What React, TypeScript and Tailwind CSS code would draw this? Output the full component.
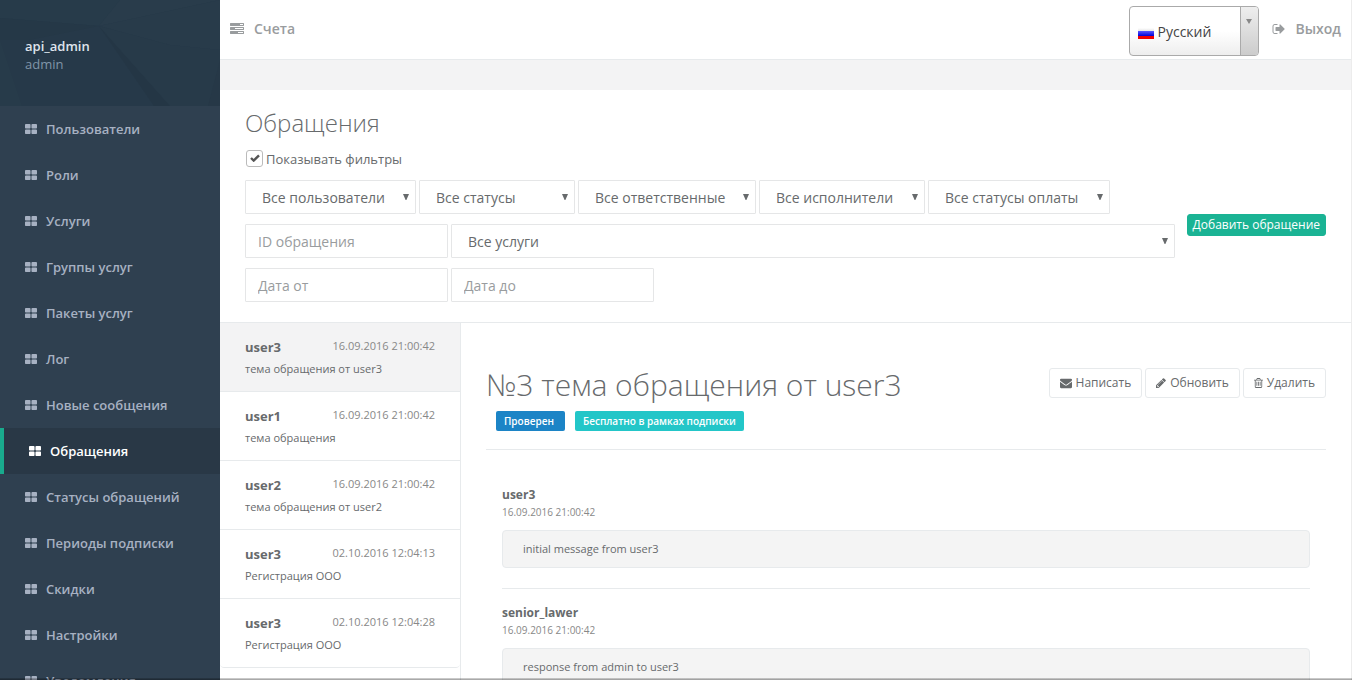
import { useState } from "react";
import type { ReactNode } from "react";

const ICONS = {
  thLarge: {
    viewBox: "64 0 1664 1792",
    path: "M832 1024v384q0 52-38 90t-90 38h-512q-52 0-90-38t-38-90v-384q0-52 38-90t90-38h512q52 0 90 38t38 90zm0-768v384q0 52-38 90t-90 38h-512q-52 0-90-38t-38-90v-384q0-52 38-90t90-38h512q52 0 90 38t38 90zm896 768v384q0 52-38 90t-90 38h-512q-52 0-90-38t-38-90v-384q0-52 38-90t90-38h512q52 0 90 38t38 90zm0-768v384q0 52-38 90t-90 38h-512q-52 0-90-38t-38-90v-384q0-52 38-90t90-38h512q52 0 90 38t38 90z",
  },
  tasks: {
    viewBox: "0 0 1792 1792",
    path: "M1024 1408h640v-128h-640v128zm-384-512h1024v-128h-1024v128zm640-512h384v-128h-384v128zm512 832v256q0 26-19 45t-45 19h-1664q-26 0-45-19t-19-45v-256q0-26 19-45t45-19h1664q26 0 45 19t19 45zm0-512v256q0 26-19 45t-45 19h-1664q-26 0-45-19t-19-45v-256q0-26 19-45t45-19h1664q26 0 45 19t19 45zm0-512v256q0 26-19 45t-45 19h-1664q-26 0-45-19t-19-45v-256q0-26 19-45t45-19h1664q26 0 45 19t19 45z",
  },
  signOut: {
    viewBox: "0 0 1792 1792",
    path: "M704 1440q0 4 1 20t.5 26.5-3 23.5-10 19.5-20.5 6.5h-320q-119 0-203.5-84.5t-84.5-203.5v-704q0-119 84.5-203.5t203.5-84.5h320q13 0 22.5 9.5t9.5 22.5q0 4 1 20t.5 26.5-3 23.5-10 19.5-20.5 6.5h-320q-66 0-113 47t-47 113v704q0 66 47 113t113 47h312l11.5 1 11.5 3 8 5.5 7 9 2 13.5zm928-544q0 26-19 45l-544 544q-19 19-45 19t-45-19-19-45v-288h-448q-26 0-45-19t-19-45v-384q0-26 19-45t45-19h448v-288q0-26 19-45t45-19 45 19l544 544q19 19 19 45z",
  },
  envelope: {
    viewBox: "0 0 1792 1792",
    path: "M1792 710v794q0 66-47 113t-113 47h-1472q-66 0-113-47t-47-113v-794q44 49 101 87 362 246 497 345 57 42 92.5 65.5t94.5 48 110 24.5h2q51 0 110-24.5t94.5-48 92.5-65.5q170-123 498-345 57-39 100-87zm0-294q0 79-49 151t-122 123q-376 261-468 325-10 7-42.5 31t-54 38.5-52 32.5-57.5 27-50 9h-2q-23 0-50-9t-57.5-27-52-32.5-54-38.5-42.5-31q-91-64-262-182.5t-205-142.5q-62-42-117-115.5t-55-136.5q0-78 41.5-130t118.5-52h1472q65 0 112.5 47t47.5 113z",
  },
  pencil: {
    viewBox: "128 0 1536 1792",
    path: "M491 1536l91-91-235-235-91 91v107h128v128h107zm523-928q0-22-22-22-10 0-17 7l-542 542q-7 7-7 17 0 22 22 22 10 0 17-7l542-542q7-7 7-17zm-54-192l416 416-832 832h-416v-416zm683 96q0 53-37 90l-166 166-416-416 166-165q36-38 90-38 53 0 91 38l235 234q37 39 37 91z",
  },
  trash: {
    viewBox: "192 0 1408 1792",
    path: "M704 736v576q0 14-9 23t-23 9h-64q-14 0-23-9t-9-23v-576q0-14 9-23t23-9h64q14 0 23 9t9 23zm256 0v576q0 14-9 23t-23 9h-64q-14 0-23-9t-9-23v-576q0-14 9-23t23-9h64q14 0 23 9t9 23zm256 0v576q0 14-9 23t-23 9h-64q-14 0-23-9t-9-23v-576q0-14 9-23t23-9h64q14 0 23 9t9 23zm128 724v-948h-896v948q0 22 7 40.5t14.5 27 10.5 8.5h832q3 0 10.5-8.5t14.5-27 7-40.5zm-672-1076h448l-48-117q-7-9-17-11h-317q-10 2-17 11zm928 32v64q0 14-9 23t-23 9h-96v948q0 83-47 143.5t-113 60.5h-832q-66 0-113-58.5t-47-141.5v-952h-96q-14 0-23-9t-9-23v-64q0-14 9-23t23-9h309l70-167q15-37 54-63t79-26h320q40 0 79 26t54 63l70 167h309q14 0 23 9t9 23z",
  },
};

const MENU = [
  "Пользователи",
  "Роли",
  "Услуги",
  "Группы услуг",
  "Пакеты услуг",
  "Лог",
  "Новые сообщения",
  "Обращения",
  "Статусы обращений",
  "Периоды подписки",
  "Скидки",
  "Настройки",
  "Уведомления",
];

const FILTERS = [
  { label: "Все пользователи", width: "w-[171px]" },
  { label: "Все статусы", width: "w-[156px]" },
  { label: "Все ответственные", width: "w-[178px]" },
  { label: "Все исполнители", width: "w-[166px]" },
  { label: "Все статусы оплаты", width: "w-[182px]" },
];

const TICKETS = [
  { user: "user3", date: "16.09.2016 21:00:42", subject: "тема обращения от user3" },
  { user: "user1", date: "16.09.2016 21:00:42", subject: "тема обращения" },
  { user: "user2", date: "16.09.2016 21:00:42", subject: "тема обращения от user2" },
  { user: "user3", date: "02.10.2016 12:04:13", subject: "Регистрация ООО" },
  { user: "user3", date: "02.10.2016 12:04:28", subject: "Регистрация ООО" },
];

const MESSAGES = [
  { user: "user3", date: "16.09.2016 21:00:42", text: "initial message from user3" },
  { user: "senior_lawer", date: "16.09.2016 21:00:42", text: "response from admin to user3" },
];

function Icon({ name, className = "" }: { name: keyof typeof ICONS; className?: string }) {
  return (
    <svg viewBox={ICONS[name].viewBox} fill="currentColor" className={`shrink-0 ${className}`} aria-hidden="true">
      <path d={ICONS[name].path} />
    </svg>
  );
}

function Select({ label, className = "" }: { label: string; className?: string }) {
  return (
    <div className={`relative ${className}`}>
      <select
        aria-label={label}
        className="block h-[34px] w-full appearance-none rounded-[1px] border border-[#e5e6e7] bg-white pt-0.5 pr-5 pl-4 text-sm"
      >
        <option>{label}</option>
      </select>
      <svg
        viewBox="0 0 6 6"
        fill="currentColor"
        className="pointer-events-none absolute top-3.5 right-[7px] size-1.5"
        aria-hidden="true"
      >
        <path d="M0 0h6L3.4 6h-.8z" />
      </svg>
    </div>
  );
}

function TextInput({ label }: { label: string }) {
  return (
    <input
      type="text"
      aria-label={label}
      placeholder={label}
      className="h-[34px] w-[203px] rounded-[1px] border border-[#e5e6e7] bg-white px-3 text-sm placeholder:text-[#999c9e]"
    />
  );
}

function ActionButton({ icon, children }: { icon: ReactNode; children: ReactNode }) {
  return (
    <button type="button" className="flex h-[30px] items-center gap-1 rounded-[3px] border border-[#e7eaec] bg-white px-2.5 text-xs">
      {icon}
      {children}
    </button>
  );
}

function Sidebar() {
  return (
    <aside className="w-[220px] shrink-0 overflow-hidden bg-[#2f4050]">
      <div className="relative h-[106px] overflow-hidden bg-[#263949]">
        <svg viewBox="0 0 220 106" preserveAspectRatio="none" className="absolute inset-0 size-full" aria-hidden="true">
          <path d="M0 0h120L99 26 0 18z" fill="#273b4a" />
          <path d="M120 0h100L99 26z" fill="#293c4b" />
          <path d="M220 0v50l-50-5L99 26z" fill="#283b4a" />
          <path d="M0 18l99 8-70 14L0 40z" fill="#253847" />
          <path d="M99 26l71 80h-16z" fill="#243645" />
          <path d="M99 26l71 19 50 5v56h-50z" fill="#273a49" />
          <path d="M0 40l22 66H0z" fill="#273b4a" />
          <path d="M220 60v46h-12z" fill="#263847" />
        </svg>
        <div className="relative px-[25px] pt-[37px] text-[13px] leading-[18px]">
          <div className="font-semibold text-[#dfe4ed]">api_admin</div>
          <div className="text-[#8095a8]">admin</div>
        </div>
      </div>
      <nav>
        {MENU.map((item) => {
          const active = item === "Обращения";
          return (
            <a
              key={item}
              href="#"
              className={`flex h-[46px] items-center gap-[9px] px-[25px] text-[13px] font-semibold ${
                active ? "border-l-4 border-[#19aa8d] bg-[#293846] text-white" : "text-[#a7b1c2]"
              }`}
            >
              <Icon name="thLarge" className="h-[13px] w-3" />
              <span className="pt-0.5">{item}</span>
            </a>
          );
        })}
      </nav>
    </aside>
  );
}

function Header() {
  return (
    <header className="flex h-[60px] shrink-0 items-start justify-between border-b border-[#e7eaec] bg-white px-2.5 pt-1.5 text-sm font-semibold text-[#999c9e]">
      <a href="#" className="flex h-[46px] items-center gap-2.5">
        <Icon name="tasks" className="size-3.5" />
        Счета
      </a>
      <div className="flex gap-[13px]">
        <div className="relative h-[50px] w-[130px] overflow-hidden rounded border border-[#aaa] bg-linear-to-b from-white from-50% to-[#eee]">
          <select aria-label="Язык" className="block size-full appearance-none bg-transparent pt-0.5 pr-5 pl-7 font-normal text-[#444]">
            <option>Русский</option>
          </select>
          <svg viewBox="0 0 16 11" className="pointer-events-none absolute top-[21px] left-2 h-[11px] w-4" aria-hidden="true">
            <defs>
              <linearGradient id="flagWhite" x1="0" y1="0" x2="0" y2="1">
                <stop offset="0" stopColor="#fff" />
                <stop offset="1" stopColor="#e6e6e6" />
              </linearGradient>
              <linearGradient id="flagBlue" x1="0" y1="0" x2="0" y2="1">
                <stop offset="0" stopColor="#5858ff" />
                <stop offset="1" stopColor="#0000d8" />
              </linearGradient>
            </defs>
            <path fill="url(#flagWhite)" d="M0 0h16v3H0z" />
            <path fill="url(#flagBlue)" d="M0 3h16v5H0z" />
            <path fill="#f00000" d="M0 8h16v3H0z" />
          </svg>
          <span className="pointer-events-none absolute inset-y-0 right-0 flex w-[18px] justify-center border-l border-[#aaa] bg-linear-to-b from-[#eee] to-[#ccc] pt-3 text-[#888]">
            <svg viewBox="0 0 6 5" fill="currentColor" className="h-[5px] w-1.5" aria-hidden="true">
              <path d="M0 0h6L3 5z" />
            </svg>
          </span>
        </div>
        <a href="#" className="flex h-[46px] items-center gap-2.5">
          <Icon name="signOut" className="size-3.5" />
          Выход
        </a>
      </div>
    </header>
  );
}

function Filters() {
  const [visible, setVisible] = useState(true);

  return (
    <section className="flex items-center border-b border-[#e7eaec] px-[25px] pt-[18px] pb-5">
      <div className="min-w-0 flex-1">
        <h2 className="text-2xl leading-[30px] font-light">Обращения</h2>
        <label className="mt-3 flex h-[18px] items-start gap-[3px] text-[13px] leading-[18px]">
          <span className="relative ml-px size-[17px]">
            <input
              type="checkbox"
              checked={visible}
              onChange={() => setVisible(!visible)}
              className="block size-full appearance-none rounded-[3px] border border-[#bbb] bg-white"
            />
            {visible && (
              <svg viewBox="0 0 10 8" className="pointer-events-none absolute top-1 left-1 h-2 w-2.5" aria-hidden="true">
                <path d="M1 4l2.7 2.6L9 1.3" fill="none" stroke="#555" strokeWidth="2.4" />
              </svg>
            )}
          </span>
          Показывать фильтры
        </label>
        {visible && (
          <div className="mt-3 flex flex-col gap-2.5">
            <div className="flex gap-[3px]">
              {FILTERS.map((filter) => (
                <Select key={filter.label} label={filter.label} className={filter.width} />
              ))}
            </div>
            <div className="flex gap-[3px]">
              <TextInput label="ID обращения" />
              <Select label="Все услуги" className="flex-1" />
            </div>
            <div className="flex gap-[3px]">
              <TextInput label="Дата от" />
              <TextInput label="Дата до" />
            </div>
          </div>
        )}
      </div>
      <button type="button" className="mt-10 ml-3 h-[22px] rounded-[3px] border border-[#1ab394] bg-[#1ab394] px-[5px] text-xs leading-5 text-white">
        Добавить обращение
      </button>
    </section>
  );
}

function TicketList() {
  return (
    <div className="w-[241px] shrink-0 border-r border-[#e7eaec]">
      <ul className="overflow-hidden rounded-b">
        {TICKETS.map((ticket, i) => (
          <li
            key={i}
            className={`border-b border-[#e7eaec] last:rounded-b ${i === 0 ? "bg-[#f3f3f4]" : "bg-white"}`}
          >
            <a href="#" className="block h-[68px] px-[25px] pt-[15px]">
              <div className="flex justify-between">
                <strong className="text-[13px] leading-[18px]">{ticket.user}</strong>
                <span className="text-[11px] leading-4 text-[#888]">{ticket.date}</span>
              </div>
              <div className="mt-1 text-[11px] leading-[18px]">{ticket.subject}</div>
            </a>
          </li>
        ))}
      </ul>
    </div>
  );
}

function TicketDetail() {
  return (
    <article className="min-w-0 flex-1 px-[25px] pt-[43px]">
      <div className="flex items-start justify-between border-b border-[#e7eaec] pb-[18px]">
        <div>
          <h1 className="text-[30px] leading-[38px] font-light">№3 тема обращения от user3</h1>
          <div className="mt-[7px] ml-2.5 flex gap-2.5 text-[10px] leading-5 font-semibold text-white">
            <span className="rounded-[2px] bg-[#1c84c6] pr-[11px] pl-2">Проверен</span>
            <span className="rounded-[2px] bg-[#23c6c8] px-2">Бесплатно в рамках подписки</span>
          </div>
        </div>
        <div className="mt-0.5 flex gap-[3px]">
          <ActionButton icon={<Icon name="envelope" className="size-3" />}>Написать</ActionButton>
          <ActionButton icon={<Icon name="pencil" className="h-3 w-2.5" />}>Обновить</ActionButton>
          <ActionButton icon={<Icon name="trash" className="h-3 w-[9px]" />}>Удалить</ActionButton>
        </div>
      </div>
      <div className="px-4 pt-4">
        {MESSAGES.map((message, i) => (
          <div key={i} className="border-b border-[#e7eaec] pt-[15px] pb-5 first:pt-5">
            <strong className="block text-xs leading-[18px]">{message.user}</strong>
            <div className="text-[10px] leading-4 text-[#888]">{message.date}</div>
            <p className="mt-2.5 rounded border border-[#e7eaec] bg-[#f4f4f4] px-5 py-[9px] text-[11px] leading-[18px]">{message.text}</p>
          </div>
        ))}
      </div>
    </article>
  );
}

export default function App() {
  return (
    <div className="relative flex h-screen overflow-hidden bg-white font-['Open_Sans','Liberation_Sans',sans-serif] text-[#676a6c]">
      <Sidebar />
      <div className="flex min-w-0 flex-1 flex-col border-r border-[#ececec]">
        <Header />
        <div className="h-[30px] shrink-0 bg-[#f3f3f4]" />
        <main className="flex min-h-0 flex-1 flex-col bg-white">
          <Filters />
          <div className="flex min-h-0 flex-1">
            <TicketList />
            <TicketDetail />
          </div>
        </main>
      </div>
      <div className="pointer-events-none absolute inset-x-0 bottom-0 h-0.5 bg-linear-to-b from-black/15 to-black/40" />
    </div>
  );
}
